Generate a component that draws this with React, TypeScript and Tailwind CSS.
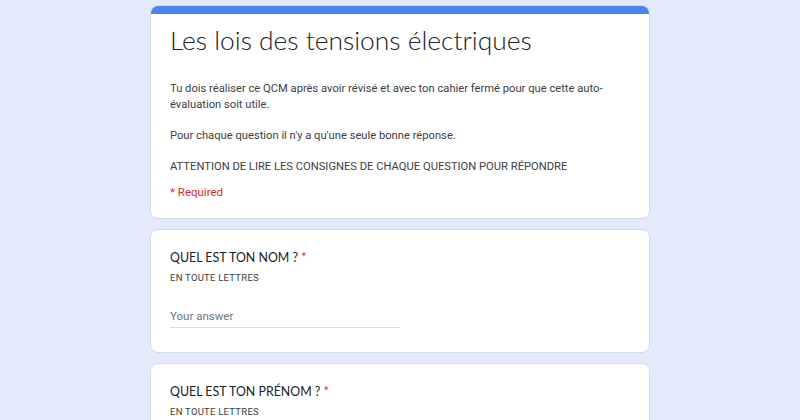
export default function App() {
  return (
    <main className="min-h-screen w-full bg-[#e2eafb] pt-[5px] font-['Roboto',sans-serif] text-[#202124]">
      <div className="mx-auto flex w-[500px] flex-col gap-[10px]">
        {/* Header card */}
        <div className="overflow-hidden rounded-lg border border-[#d5dbe6] bg-white">
          <div className="h-[8px] bg-[#4a86e8]" />
          <div className="px-[19px] pb-[18px] pt-[10px]">
            <h1 className="font-['Lato',sans-serif] text-[26.4px] leading-[32px] font-light">
              Les lois des tensions électriques
            </h1>
            <div className="mt-[25px] text-[11.2px] leading-[16px] text-[#3c4043]">
              <p>
                Tu dois réaliser ce QCM après avoir révisé et avec ton cahier fermé pour que cette auto-évaluation soit utile.
              </p>
              <p className="mt-[15px]">Pour chaque question il n'y a qu'une seule bonne réponse.</p>
              <p className="mt-[15px]">ATTENTION DE LIRE LES CONSIGNES DE CHAQUE QUESTION POUR RÉPONDRE</p>
            </div>
            <p className="mt-[9px] text-[11.5px] leading-[16px] text-[#d93025]">* Required</p>
          </div>
        </div>

        <Question title="QUEL EST TON NOM ?" />
        <Question title="QUEL EST TON PRÉNOM ?" />
      </div>
    </main>
  );
}

function Question({ title }: { title: string }) {
  return (
    <div className="rounded-lg border border-[#d5dbe6] bg-white px-[19px] pb-[24px] pt-[19px]">
      <div className="font-['Lato',sans-serif] text-[12.4px] leading-[18px] font-normal">
        {title} <span className="text-[#d93025]">*</span>
      </div>
      <div className="mt-[4px] text-[9.5px] leading-[14px] tracking-[0.25px] text-[#3c4043]">EN TOUTE LETTRES</div>
      <div className="mt-[23px] w-[230px] border-b border-[#dadce0] pb-[3px] text-[11.5px] leading-[16px] text-[#70757a]">
        Your answer
      </div>
    </div>
  );
}
